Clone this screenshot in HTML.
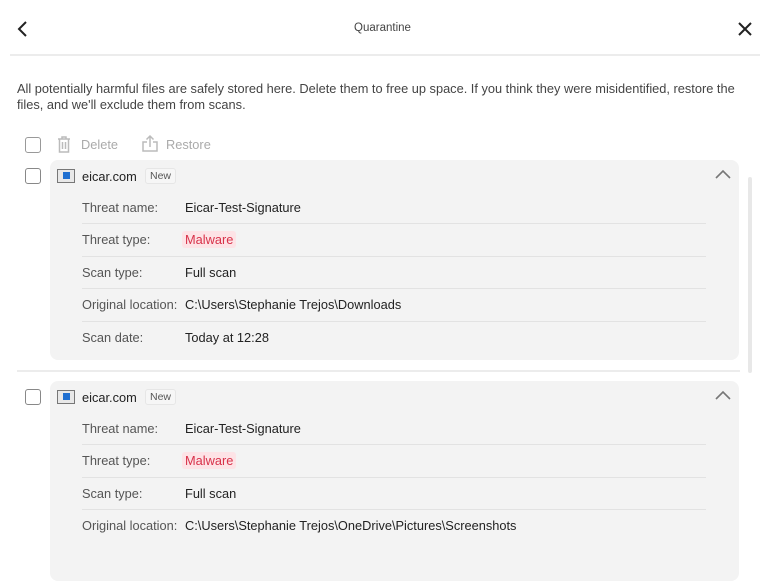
<!DOCTYPE html>
<html><head><meta charset="utf-8"><style>
*{margin:0;padding:0;box-sizing:border-box}
body{width:765px;height:547px;overflow:hidden;background:#fff;font-family:"Liberation Sans",sans-serif;color:#222;position:relative}
.a{position:absolute;white-space:nowrap}
.t{font-size:12.8px;line-height:16px}
.cb{position:absolute;width:16px;height:16px;border:1.5px solid #888;border-radius:3px;background:#fff}
.card{position:absolute;left:50px;width:689px;background:#f3f3f3;border-radius:8px}
.div{position:absolute;left:82px;width:624px;height:1px;background:#e2e2e2}
.lab{color:#555}
.mal{background:#fde3e6;color:#d8324a;border-radius:3px;padding:1px 3px;margin-left:-3px}
.new{position:absolute;font-size:10.5px;color:#555;border:1px solid #e6e6e6;border-radius:3px;padding:1px 4px;background:#f6f6f6}
.ic{position:absolute;width:18px;height:14px;border:1.5px solid #777;background:#e8e8e8}
.ic i{position:absolute;left:5px;top:2px;width:7px;height:7px;background:#1f6fd0}
</style></head><body>
<svg class="a" style="left:15px;top:20px" width="14" height="18"><path d="M11 2 L4 9 L11 16" stroke="#222" stroke-width="2" fill="none"/></svg>
<div class="a" style="left:0;width:765px;top:22px;text-align:center;font-size:11.5px;color:#444">Quarantine</div>
<svg class="a" style="left:737px;top:21px" width="16" height="16"><path d="M2 2 L14 14 M14 2 L2 14" stroke="#222" stroke-width="2"/></svg>
<div class="a" style="left:10px;top:54px;width:750px;height:2px;background:#ececec"></div>
<div class="a t" style="left:17px;top:81px;line-height:16px;color:#444;white-space:normal;width:735px">All potentially harmful files are safely stored here. Delete them to free up space. If you think they were misidentified, restore the files, and we'll exclude them from scans.</div>
<div class="cb" style="left:25px;top:137px;border-color:#999"></div>
<svg class="a" style="left:56px;top:135px" width="16" height="19"><path d="M2 4 H14 M6 4 V2 H10 V4 M3.5 4 V17 H12.5 V4 M6.5 7 V14 M9.5 7 V14" stroke="#bbb" stroke-width="1.5" fill="none"/></svg>
<div class="a t" style="left:81px;top:137px;color:#aaa">Delete</div>
<svg class="a" style="left:141px;top:134px" width="18" height="19"><path d="M6 8 H2 V17 H16 V8 H12 M9 13 V2 M5.5 5.5 L9 2 L12.5 5.5" stroke="#bbb" stroke-width="1.5" fill="none"/></svg>
<div class="a t" style="left:166px;top:137px;color:#aaa">Restore</div>

<div class="card" style="top:160px;height:200px"></div>
<div class="cb" style="left:25px;top:168px"></div>
<div class="ic" style="left:57px;top:169px"><i></i></div>
<div class="a t" style="left:82px;top:169px">eicar.com</div>
<div class="new" style="left:145px;top:168px">New</div>
<svg class="a" style="left:714px;top:169px" width="18" height="11"><path d="M2 9 L9 2 L16 9" stroke="#777" stroke-width="1.6" fill="none"/></svg>
<div class="a t lab" style="left:82px;top:200px">Threat name:</div><div class="a t" style="left:185px;top:200px">Eicar-Test-Signature</div>
<div class="div" style="top:223px"></div>
<div class="a t lab" style="left:82px;top:232px">Threat type:</div><div class="a t" style="left:185px;top:232px"><span class="mal">Malware</span></div>
<div class="div" style="top:256px"></div>
<div class="a t lab" style="left:82px;top:265px">Scan type:</div><div class="a t" style="left:185px;top:265px">Full scan</div>
<div class="div" style="top:288px"></div>
<div class="a t lab" style="left:82px;top:297px">Original location:</div><div class="a t" style="left:185px;top:297px">C:\Users\Stephanie Trejos\Downloads</div>
<div class="div" style="top:321px"></div>
<div class="a t lab" style="left:82px;top:330px">Scan date:</div><div class="a t" style="left:185px;top:330px">Today at 12:28</div>

<div class="a" style="left:17px;top:370px;width:723px;height:2px;background:#ececec"></div>
<div class="a" style="left:748px;top:177px;width:4px;height:196px;background:#e8e8e8;border-radius:2px"></div>

<div class="card" style="top:381px;height:200px"></div>
<div class="cb" style="left:25px;top:389px"></div>
<div class="ic" style="left:57px;top:390px"><i></i></div>
<div class="a t" style="left:82px;top:390px">eicar.com</div>
<div class="new" style="left:145px;top:389px">New</div>
<svg class="a" style="left:714px;top:390px" width="18" height="11"><path d="M2 9 L9 2 L16 9" stroke="#777" stroke-width="1.6" fill="none"/></svg>
<div class="a t lab" style="left:82px;top:421px">Threat name:</div><div class="a t" style="left:185px;top:421px">Eicar-Test-Signature</div>
<div class="div" style="top:444px"></div>
<div class="a t lab" style="left:82px;top:453px">Threat type:</div><div class="a t" style="left:185px;top:453px"><span class="mal">Malware</span></div>
<div class="div" style="top:477px"></div>
<div class="a t lab" style="left:82px;top:486px">Scan type:</div><div class="a t" style="left:185px;top:486px">Full scan</div>
<div class="div" style="top:509px"></div>
<div class="a t lab" style="left:82px;top:518px">Original location:</div><div class="a t" style="left:185px;top:518px">C:\Users\Stephanie Trejos\OneDrive\Pictures\Screenshots</div>
</body></html>
